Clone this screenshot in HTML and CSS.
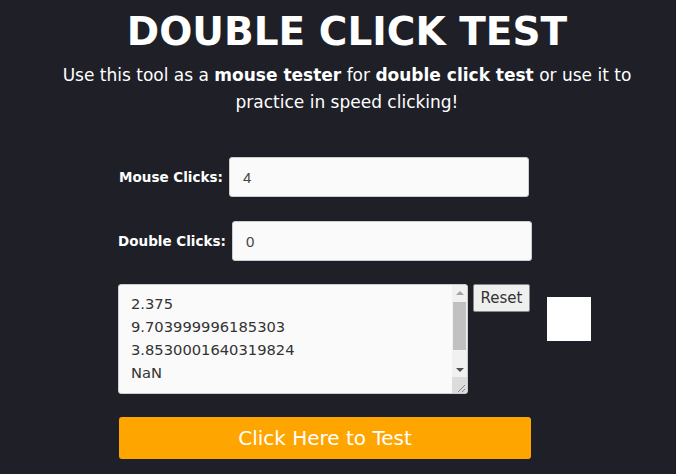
FILE: index.html
```html
<!DOCTYPE html>
<html lang="en">
<head>
    <meta charset="UTF-8">
    <meta name="viewport" content="width=device-width, initial-scale=1.0">
    <title>Double Click Test</title>
    <link rel="stylesheet" href="styles.css">
</head>
<body>
    <div class="header">
        <h1>DOUBLE CLICK TEST</h1>
        <p>Use this tool as a <strong>mouse tester</strong> for <strong>double click test</strong> or use it to practice in speed clicking!</p>
    </div>

    <div class="container">
        <div class="row">
            <label for="mouseClicks">Mouse Clicks:</label>
            <input id="mouseClicks" type="text" value="4">
        </div>
        <div class="row row-double">
            <label for="doubleClicks">Double Clicks:</label>
            <input id="doubleClicks" type="text" value="0">
        </div>
        <div class="log-row">
            <div class="log-box">
                <textarea id="log">2.375
9.703999996185303
3.8530001640319824
NaN</textarea>
                <div class="scrollbar">
                    <span class="arrow up"></span>
                    <span class="track"><span class="thumb"></span></span>
                    <span class="arrow down"></span>
                    <span class="corner">
                        <svg width="15" height="16" viewBox="0 0 15 16">
                            <line x1="13" y1="8" x2="6" y2="15" stroke="#888" stroke-width="1"/>
                            <line x1="13" y1="12" x2="10" y2="15" stroke="#888" stroke-width="1"/>
                        </svg>
                    </span>
                </div>
            </div>
            <button class="reset">Reset</button>
            <div class="indicator"></div>
        </div>
        <button class="test-btn">Click Here to Test</button>
    </div>
</body>
</html>
```

FILE: styles.css
```css
body {
    margin: 0;
    background-color: #1e1f27;
    color: white;
    font-family: "DejaVu Sans", sans-serif;
}
.header {
    width: 676px;
    padding-left: 18px;
    box-sizing: border-box;
    text-align: center;
}
h1 {
    margin: 0;
    padding-top: 10px;
    font-size: 39px;
    line-height: 44px;
    font-weight: 800;
}
.header p {
    margin: 8px auto 0;
    width: 600px;
    font-size: 17px;
    line-height: 27px;
}
.container {
    width: 414px;
    margin: 41px 0 0 117px;
}
.row {
    display: flex;
    align-items: center;
    justify-content: center;
    gap: 6px;
    margin-bottom: 24px;
}
.row-double {
    margin-bottom: 23px;
    padding-left: 2px;
}
label {
    flex-shrink: 0;
    white-space: nowrap;
    font-size: 13.5px;
    font-weight: bold;
}
input[type="text"] {
    flex-shrink: 0;
    width: 300px;
    height: 40px;
    box-sizing: border-box;
    padding: 0 13px;
    font-size: 15px;
    color: #444;
    background-color: #fafafa;
    border: 1px solid #ccc;
    border-radius: 3px;
}
.log-row {
    display: flex;
    align-items: flex-start;
    margin-left: 1px;
}
.log-box {
    flex-shrink: 0;
    display: flex;
    width: 350px;
    height: 110px;
    box-sizing: border-box;
    background-color: #fafafa;
    border: 1px solid #ccc;
    border-radius: 3px;
    overflow: hidden;
}
textarea {
    flex: 1;
    padding: 7px 12px;
    font-family: "DejaVu Sans", sans-serif;
    font-size: 14.7px;
    line-height: 23px;
    color: #333;
    background-color: transparent;
    border: none;
    outline: none;
    overflow: hidden;
    resize: none;
}
.scrollbar {
    display: flex;
    flex-direction: column;
    width: 15px;
    background-color: #f1f1f1;
}
.arrow {
    display: flex;
    justify-content: center;
    align-items: center;
    height: 15px;
}
.arrow::before {
    content: "";
    border-left: 4px solid transparent;
    border-right: 4px solid transparent;
}
.arrow.up::before {
    border-bottom: 4px solid #a3a3a3;
}
.arrow.down::before {
    border-top: 4px solid #505050;
}
.track {
    flex: 1;
    padding: 2px 1px;
}
.thumb {
    display: block;
    height: 48px;
    background-color: #c1c1c1;
}
.corner {
    display: block;
    height: 16px;
    background-color: #dcdcdc;
}
.corner svg {
    display: block;
}
.reset {
    flex-shrink: 0;
    margin-left: 5px;
    padding: 0 6px;
    width: 57px;
    height: 28px;
    font-family: "DejaVu Sans", sans-serif;
    font-size: 15px;
    color: #333;
    background-color: #efefef;
    border: 1px solid #888;
    border-radius: 2px;
}
.indicator {
    flex-shrink: 0;
    width: 44px;
    height: 44px;
    margin: 13px 0 0 17px;
    background-color: white;
}
.test-btn {
    display: block;
    width: 412px;
    height: 42px;
    margin: 23px 0 0 2px;
    font-family: "DejaVu Sans", sans-serif;
    font-size: 20px;
    color: white;
    background-color: #ffa500;
    border: none;
    border-radius: 3px;
}
```
